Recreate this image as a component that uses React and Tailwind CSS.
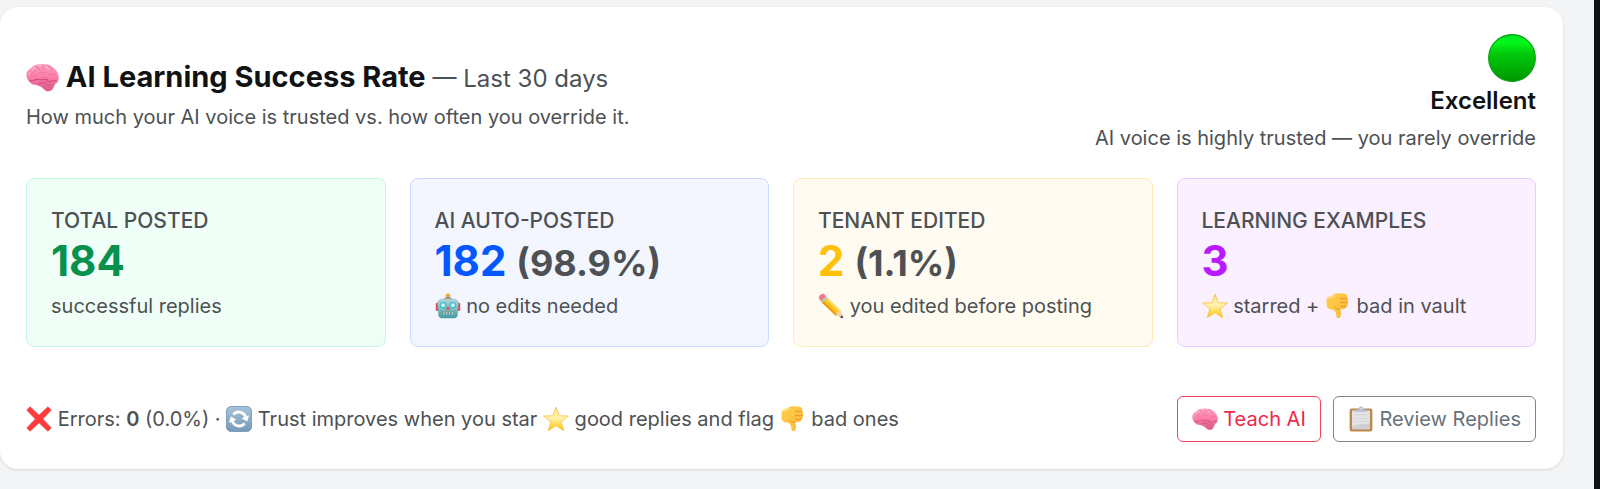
import clsx from "clsx"

function Icon({ className, children, label }) {
  return (
    <svg
      viewBox="0 0 32 32"
      role="img"
      aria-label={label}
      className={clsx("inline-block shrink-0", className || "size-[26px] -mt-2 -mb-1")}
    >
      {children}
    </svg>
  )
}

function Brain({ className }) {
  return (
    <Icon className={className} label="brain">
      <defs>
        <linearGradient id="brain" x1="0" y1="0" x2="0" y2="1">
          <stop offset="0" stopColor="#ff9fc0" />
          <stop offset="0.5" stopColor="#fb7ba7" />
          <stop offset="1" stopColor="#d9588a" />
        </linearGradient>
      </defs>
      <path d="M0.500 15C0 11 2 8 5 7c2-3 6-4 10-4 5 0 9 1 11 3 3 2 5 5 5.500 8 .5 3 0 7-3 8l-2 4c-1 3-4 4-7 3l-5-4-5-2c-4 1-8-4-9-8z" fill="url(#brain)" />
      <path d="M17 23c3-2 8-2 10 0 0 3-3 5-5 5s-4-2-5-5z" fill="#e0628f" />
      <g fill="none" stroke="#e86f9b" strokeWidth="0.800" strokeLinecap="round">
        <path d="M4 14c1-3 4-2 5-5M9 5c1 2 4 1 5 4M16 4c-1 2 2 3 1 5M21 4c0 3 4 2 4 5M12 12c3-2 5 1 8-1M14 16c2-1 4 1 6 0M23 13c2-1 3 1 6 0M8 13c0 1 1 2 2 2" />
      </g>
      <g fill="none" stroke="#c74e7d" strokeWidth="1" strokeLinecap="round">
        <path d="M4 19c3 1 5-2 9-1s5-1 8 0M12 22c3 0 4-2 7-1M20 19c3 2 6 0 9 0" />
      </g>
      <g fill="none" stroke="#ffd4e3" strokeWidth="0.800" strokeLinecap="round">
        <path d="M6 9c1-2 2-2 3-2M12 5c1-1 2-1 3-1M20 6c1 0 2 1 2 2M3 13c0-1 1-2 1-2" />
      </g>
    </Icon>
  )
}

function Robot() {
  return (
    <Icon label="robot">
      <defs>
        <linearGradient id="robot" x1="0" y1="0" x2="0" y2="1">
          <stop offset="0" stopColor="#b5d0d2" />
          <stop offset="0.5" stopColor="#80bfc2" />
          <stop offset="1" stopColor="#3f9a9e" />
        </linearGradient>
      </defs>
      <circle cx="16" cy="3.500" r="2.800" fill="#f5a623" />
      <path d="M11 8c0-4 10-4 10 0z" fill="#7f93a6" />
      <rect x="1" y="12" width="4" height="10" rx="1.500" fill="#d9475c" />
      <rect x="27" y="12" width="4" height="10" rx="1.500" fill="#d9475c" />
      <path d="M9 7h14c4 0 6 2 6 6l-1 13c0 3-2 5-5 5H9c-3 0-5-2-5-5L3 13c0-4 2-6 6-6z" fill="url(#robot)" />
      <circle cx="10" cy="15" r="4" fill="#35c3d0" />
      <circle cx="22" cy="15" r="4" fill="#35c3d0" />
      <circle cx="10" cy="15" r="2.300" fill="#d7fbff" />
      <circle cx="22" cy="15" r="2.300" fill="#d7fbff" />
      <path d="M16 15.500l2.500 5h-5z" fill="#e5485d" />
      <rect x="8" y="22" width="16" height="5" rx="2" fill="#6d9ca2" />
      <path d="M11 23v3.500M14.500 23v3.500M18 23v3.500M21.500 23v3.500" stroke="#bcdcdc" strokeWidth="1.200" />
    </Icon>
  )
}

function Pencil() {
  return (
    <Icon label="pencil">
      <path d="M1 6c0-3 3-5 6-5l3 3-6 7z" fill="#f2788c" />
      <path d="M3 10l7-6 3 3-7 6z" fill="#b8c2c9" />
      <path d="M5 12l7-6 16 16-6 6z" fill="#fcc21b" />
      <path d="M5 12l2-2 17 17-2 1z" fill="#e59a14" />
      <path d="M10 8l2-2 16 16-1 2z" fill="#ffdc5c" />
      <path d="M22 28l1-4 2-1 3-1 3 9z" fill="#f5d3a0" />
      <path d="M28 28.500l2-1 1 3.500-3.500-1z" fill="#3d3a38" />
    </Icon>
  )
}

function Star() {
  return (
    <Icon label="star">
      <defs>
        <linearGradient id="star" x1="0" y1="0" x2="0" y2="1">
          <stop offset="0" stopColor="#ffe27a" />
          <stop offset="0.45" stopColor="#fff3b0" />
          <stop offset="1" stopColor="#ffc400" />
        </linearGradient>
      </defs>
      <path
        d="M16 1.500l4 10.500 11.300.4-8.900 7 3.100 11L16 24.200 6.500 30.400l3.100-11-8.900-7L12 12z"
        fill="url(#star)"
        stroke="#f8c04a"
        strokeWidth="1"
        strokeLinejoin="round"
      />
    </Icon>
  )
}

function ThumbDown() {
  return (
    <Icon label="thumbs down">
      <defs>
        <linearGradient id="thumb" x1="0" y1="0" x2="1" y2="1">
          <stop offset="0" stopColor="#ffcf4d" />
          <stop offset="1" stopColor="#fcb737" />
        </linearGradient>
      </defs>
      <path
        d="M2 6c2-2 5-2 8-4 3-2 10-2 14-1 3 .5 4 3 3 5 2 1 2.500 4 .5 5.500C29 14 28 16 26 17c0 2-2 3-5 3h-2c1 3 1 6 0 9-1 2.500-4 2.500-5 0 0-4-1-6-3-8-3 0-7-1-9-4z"
        fill="url(#thumb)"
      />
      <path d="M19 6.500c3 .8 5 .5 8-.5M19 11.500c3 .8 6 .5 8.500 0M19 16c3 .8 5 .8 7 .5M18 20c-3 0-5-1-6-3" fill="none" stroke="#e3951f" strokeWidth="1.200" strokeLinecap="round" />
      <path d="M3 7c3-1 6-2 9-4" fill="none" stroke="#ffe08a" strokeWidth="1.500" strokeLinecap="round" />
    </Icon>
  )
}

function Cross() {
  return (
    <Icon label="error">
      <path d="M5 1l11 10.500L27 1l4 4-10.500 11L31 27l-4 4-11-10.500L5 31l-4-4 10.500-11L1 5z" fill="#ff3b3b" stroke="#ff3b3b" strokeLinejoin="round" />
    </Icon>
  )
}

function Refresh() {
  return (
    <Icon label="refresh">
      <defs>
        <linearGradient id="refresh" x1="0" y1="0" x2="0" y2="1">
          <stop offset="0" stopColor="#a5c3dc" />
          <stop offset="1" stopColor="#7699b8" />
        </linearGradient>
      </defs>
      <rect x="0.500" y="0.500" width="31" height="31" rx="6" fill="url(#refresh)" stroke="#6e8fac" />
      <g fill="none" stroke="#fff" strokeWidth="3.500">
        <path d="M9 10.500c4-5 12-4 15.500 3" />
        <path d="M23 21.500c-4 5-12 4-15.500-3" />
      </g>
      <path d="M28.500 11.500L26 19l-7-4z" fill="#fff" />
      <path d="M3.500 20.500L6 13l7 4z" fill="#fff" />
    </Icon>
  )
}

function Clipboard() {
  return (
    <Icon label="clipboard">
      <rect x="2" y="3" width="28" height="28.500" rx="2.500" fill="#b98a4b" />
      <rect x="5" y="5.500" width="22" height="23" fill="#e4e4e6" />
      <path d="M5 25l22-4v7.500H5z" fill="#cfcfd3" />
      <path d="M8 11h16M8 15h16M8 19h16M8 23h11" stroke="#d2d3d6" strokeWidth="1" />
      <path d="M8 7c0-3 4-2 5-4 1-3 5-3 6 0 1 2 5 1 5 4z" fill="#b4c0d0" />
      <circle cx="16" cy="3" r="1" fill="#eef1f6" />
    </Icon>
  )
}

function GreenCircle() {
  return (
    <Icon className="size-12" label="green">
      <defs>
        <linearGradient id="green" x1="0" y1="0" x2="0" y2="1">
          <stop offset="0" stopColor="#00e024" />
          <stop offset="0.16" stopColor="#00fa1c" />
          <stop offset="0.42" stopColor="#00c80a" />
          <stop offset="1" stopColor="#009800" />
        </linearGradient>
      </defs>
      <circle cx="16" cy="16" r="15.600" fill="url(#green)" stroke="#089f12" strokeWidth="0.700" />
    </Icon>
  )
}

const stats = [
  {
    label: "TOTAL POSTED",
    value: "184",
    color: "text-[#07914c]",
    box: "bg-[#f0fef8] border-[#c4f8dc]",
    note: "successful replies",
  },
  {
    label: "AI AUTO-POSTED",
    value: "182",
    percent: "(98.9%)",
    color: "text-[#0558ff]",
    box: "bg-[#f3f6ff] border-[#c8dcff]",
    note: <><Robot /> no edits needed</>,
  },
  {
    label: "TENANT EDITED",
    value: "2",
    percent: "(1.1%)",
    color: "text-[#ffc107]",
    box: "bg-[#fffbf0] border-[#ffebb8]",
    note: <><Pencil /> you edited before posting</>,
  },
  {
    label: "LEARNING EXAMPLES",
    value: "3",
    color: "text-[#b91aff]",
    box: "bg-[#faf0ff] border-[#ebccff]",
    note: <><Star /> starred + <ThumbDown /> bad in vault</>,
  },
]

export default function App() {
  return (
    <div className="flex min-h-screen bg-[#f2f4f6] font-['Inter',sans-serif] text-[20px] leading-8 text-[#4d5154]">

      <main className="flex-1 pt-[7px] pr-[31px] pb-5">

        <section className="rounded-[18px] bg-white py-[27px] pr-[27px] pl-[26px] shadow-sm">

          {/* HEADER */}
          <header className="flex items-center justify-between">
            <div className="pt-1">
              <h1 className="text-[29px] leading-9 font-bold text-[#101214]">
                <Brain className="size-[33px] -mt-1" /> AI Learning Success Rate{" "}
                <span className="text-[24px] font-normal text-[#4d5154]">— Last 30 days</span>
              </h1>
              <p className="mt-1">How much your AI voice is trusted vs. how often you override it.</p>
            </div>

            <div className="flex flex-col items-end">
              <GreenCircle />
              <strong className="mt-[3px] text-[24px] font-semibold text-[#101214]">Excellent</strong>
              <p className="mt-[5px]">AI voice is highly trusted — you rarely override</p>
            </div>
          </header>

          {/* STATS */}
          <div className="mt-6 grid grid-cols-4 gap-6">
            {stats.map(s => (
              <div key={s.label} className={clsx("rounded-lg border px-6 pt-[26px] pb-6", s.box)}>
                <div className="text-[21px] font-medium">{s.label}</div>
                <div className="text-[42px] leading-[48px] font-bold">
                  <span className={s.color}>{s.value}</span>{" "}
                  {s.percent && <span className="text-[36px] leading-none">{s.percent}</span>}
                </div>
                <div className="mt-[5px]">{s.note}</div>
              </div>
            ))}
          </div>

          {/* FOOTER */}
          <footer className="mt-[49px] flex items-center justify-between">
            <p>
              <Cross /> Errors: <strong className="font-semibold">0</strong> (0.0%) · <Refresh /> Trust improves when you star <Star /> good replies and flag <ThumbDown /> bad ones
            </p>
            <div className="flex gap-3">
              <button className="rounded-md border border-[#f5455a] px-[14px] py-[6px] text-[#f0284a]">
                <Brain /> Teach AI
              </button>
              <button className="rounded-md border border-[#7b858e] px-[14px] py-[6px] text-[#67717a]">
                <Clipboard /> Review Replies
              </button>
            </div>
          </footer>

        </section>

      </main>

      <div className="w-[6px] bg-[#111213]" />

    </div>
  )
}
